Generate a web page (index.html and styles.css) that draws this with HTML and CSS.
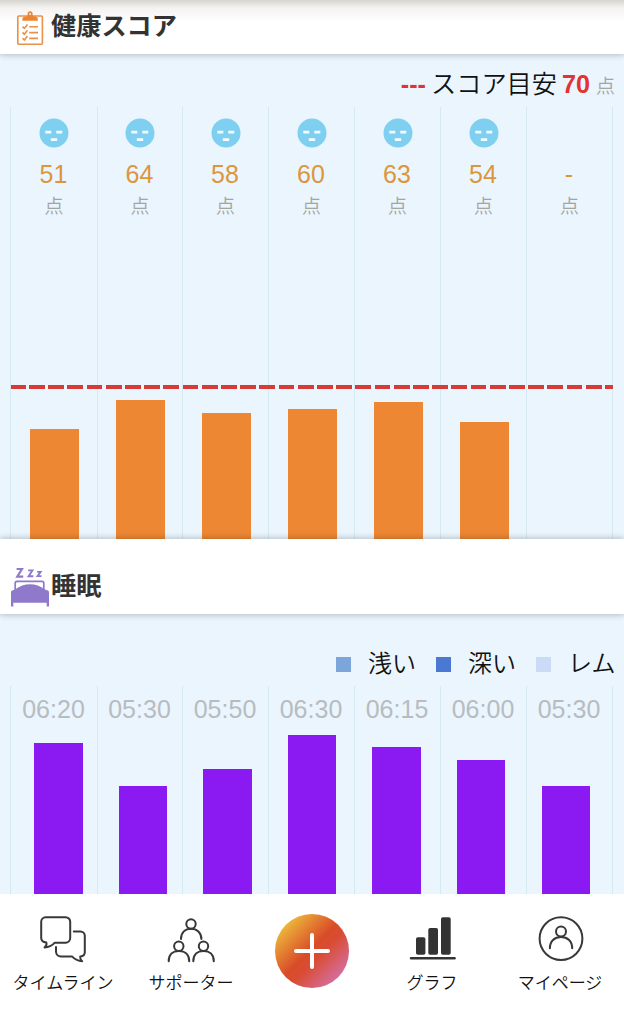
FILE: index.html
```html
<!DOCTYPE html>
<html lang="ja">
<head>
    <meta charset="UTF-8">
    <meta name="viewport" content="width=device-width, initial-scale=1.0">
    <title>グラフ</title>
    <link rel="stylesheet" href="styles.css">
</head>
<body>

    <svg class="defs" width="0" height="0">
        <symbol id="face" viewBox="0 0 30 30">
            <circle cx="15" cy="15" r="14.5" fill="#7fcff0"/>
            <path d="M6.3 14.1h6M17.3 14.1h6M11.8 21.6h6.4" stroke="#f4fbff" stroke-width="2.8"/>
        </symbol>
    </svg>

    <div class="header header-score">
        <svg class="icon-clipboard" width="28" height="36" viewBox="0 0 28 36" fill="none" stroke="#e8914a" stroke-width="1.6">
            <rect x="1.8" y="6" width="24.6" height="28.2" rx="1"/>
            <path d="M6.4 10.8V9q0-1.8 1.8-2.2l3.4-.9V3.8a2.5 2.5 0 0 1 5 0v2.1l3.4.9q1.8.4 1.8 2.2v1.8z" fill="#ec8432" stroke="none"/>
            <circle cx="14.100" cy="4" r="0.9" fill="#fff" stroke="none"/>
            <path d="M6.500 16.600l1.800 1.800 3.200-4M6.500 22.400l1.800 1.800 3.200-4M6.500 28.200l1.800 1.800 3.200-4M13.200 16.800h8.800M13.200 22.600h8.800M13.200 28.400h8.800"/>
        </svg>
        <h2>健康スコア</h2>
    </div>

    <div class="section section-score">
        <div class="legend-score">
            <span class="target-dash">---</span>
            <span>スコア目安</span>
            <span class="target-value">70</span>
            <span class="unit">点</span>
        </div>
        <div class="chart">
            <div class="columns">
                <div class="column"><svg class="face"><use href="#face"/></svg><span class="score">51</span><span class="unit">点</span></div>
                <div class="column"><svg class="face"><use href="#face"/></svg><span class="score">64</span><span class="unit">点</span></div>
                <div class="column"><svg class="face"><use href="#face"/></svg><span class="score">58</span><span class="unit">点</span></div>
                <div class="column"><svg class="face"><use href="#face"/></svg><span class="score">60</span><span class="unit">点</span></div>
                <div class="column"><svg class="face"><use href="#face"/></svg><span class="score">63</span><span class="unit">点</span></div>
                <div class="column"><svg class="face"><use href="#face"/></svg><span class="score">54</span><span class="unit">点</span></div>
                <div class="column"><svg class="face"></svg><span class="score">-</span><span class="unit">点</span></div>
            </div>
            <div class="target-line"></div>
            <div class="bars bars-score">
                <div class="bar" style="height: 110.5px"></div>
                <div class="bar" style="height: 139px"></div>
                <div class="bar" style="height: 126px"></div>
                <div class="bar" style="height: 130.5px"></div>
                <div class="bar" style="height: 137px"></div>
                <div class="bar" style="height: 117.5px"></div>
            </div>
        </div>
    </div>

    <div class="header header-sleep">
        <svg class="icon-bed" width="38" height="40" viewBox="0 0 38 40" fill="none" stroke="#8f79cb">
            <path d="M5.6 2h5.4L6.2 9.6h6" stroke-width="2.1"/>
            <path d="M17.2 3.4h4.2L17.600 9.200h4.700" stroke-width="1.9"/>
            <path d="M26.200 4.800h3.500l-3.200 4.400h4" stroke-width="1.8"/>
            <path d="M4.200 24v-7.800q0-1.800 1.800-1.800h25q1.800 0 1.800 1.800V24" stroke-width="1.700"/>
            <path d="M0 39.500V25.200q0-1.200 1.200-1.600L4 22.600Q11 17.300 19 17.300T34 22.600l2.800 1q1.200.4 1.200 1.600v14.300h-2.300v-3.800H2.300v3.800z" fill="#8f79cb" stroke="none"/>
        </svg>
        <h2>睡眠</h2>
    </div>

    <div class="section section-sleep">
        <div class="legend-sleep">
            <span class="swatch light"></span><span class="label">浅い</span>
            <span class="swatch deep"></span><span class="label">深い</span>
            <span class="swatch rem"></span><span class="label">レム</span>
        </div>
        <div class="chart">
            <div class="columns">
                <div class="column time">06:20</div>
                <div class="column time">05:30</div>
                <div class="column time">05:50</div>
                <div class="column time">06:30</div>
                <div class="column time">06:15</div>
                <div class="column time">06:00</div>
                <div class="column time">05:30</div>
            </div>
            <div class="bars bars-sleep">
                <div class="bar" style="height: 151.5px"></div>
                <div class="bar" style="height: 108px"></div>
                <div class="bar" style="height: 125.5px"></div>
                <div class="bar" style="height: 159.5px"></div>
                <div class="bar" style="height: 147px"></div>
                <div class="bar" style="height: 134px"></div>
                <div class="bar" style="height: 108px"></div>
            </div>
        </div>
    </div>

    <div class="nav">
        <div class="nav-item">
            <svg width="48" height="48" viewBox="0 0 48 48" fill="none" stroke="#383838" stroke-width="2" stroke-linecap="round" stroke-linejoin="round">
                <path d="M6.6 2.2h20a4.6 4.6 0 0 1 4.6 4.6v16.3a4.6 4.6 0 0 1-4.6 4.600H15.800q-4.200 4.600-10.200 4.700Q8 30.600 7.400 27.600 2.200 27 2.200 23.100V6.800a4.600 4.600 0 0 1 4.400-4.600z"/>
                <path d="M34.800 16.400h6.600a4.400 4.400 0 0 1 4.400 4.400v16.400q0 3.800-4.600 4.400-.3 2.800 2 4.600-5.600 0-10.200-4.800H22a5 5 0 0 1-5-5v-4.400"/>
            </svg>
            <span>タイムライン</span>
        </div>
        <div class="nav-item">
            <svg width="48" height="48" viewBox="0 0 48 48" fill="none" stroke="#383838" stroke-width="2" stroke-linecap="round">
                <circle cx="24" cy="9" r="4.7"/>
                <path d="M14 24c0-6.500 4.200-10.300 10-10.300S34.400 17.500 34.400 24"/>
                <circle cx="11.800" cy="31.200" r="4.700"/>
                <path d="M1.700 46.200c0-6.600 4.200-10.300 10.200-10.300s10.300 3.700 10.300 10.300"/>
                <circle cx="36.500" cy="31.200" r="4.700"/>
                <path d="M26.300 46.200c0-6.600 4.200-10.300 10.200-10.300s10.300 3.700 10.300 10.300"/>
            </svg>
            <span>サポーター</span>
        </div>
        <div class="nav-add">
            <svg width="38" height="38" viewBox="0 0 38 38" stroke="#fff" stroke-width="4" stroke-linecap="round">
                <path d="M19 3v32M3 19h32"/>
            </svg>
        </div>
        <div class="nav-item">
            <svg width="48" height="48" viewBox="0 0 48 48" fill="#333">
                <rect x="8" y="22.300" width="9.400" height="17.400" rx="1.800"/>
                <rect x="20.300" y="13" width="9.700" height="26.700" rx="1.800"/>
                <rect x="33" y="2.300" width="9.700" height="37.400" rx="1.800"/>
                <rect x="1.800" y="41.900" width="46" height="2.500" rx="1.200"/>
            </svg>
            <span>グラフ</span>
        </div>
        <div class="nav-item">
            <svg width="48" height="48" viewBox="0 0 48 48" fill="none" stroke="#383838" stroke-width="2" stroke-linecap="round">
                <circle cx="25" cy="23.600" r="21.400"/>
                <circle cx="25" cy="16.600" r="5"/>
                <path d="M13.900 33.200c0-7 4.500-11.200 11.100-11.200s11.200 4.200 11.200 11.200"/>
            </svg>
            <span>マイページ</span>
        </div>
    </div>

</body>
</html>
```
FILE: styles.css
```css
* {
    box-sizing: border-box;
}

body {
    font-family: "Liberation Sans", "Noto Sans CJK JP", sans-serif;
    margin: 0;
    width: 624px;
    height: 1024px;
    overflow: hidden;
    background-color: #fff;
    color: #111;
}

.defs {
    display: block;
}

.header {
    display: flex;
    position: relative;
    background-color: #fff;
    box-shadow: 0 0 7px rgba(0, 0, 0, 0.3);
}

.header h2 {
    font-size: 25.2px;
    line-height: 36px;
    font-weight: bold;
    margin: 0;
    color: #333;
}

.header-score {
    height: 54px;
    padding: 8px 0 0 16px;
    gap: 7px;
    background: linear-gradient(#d8d5d0, #f4f3f1 8px, #fff 22px);
}

.icon-clipboard {
    margin-top: 2px;
}

.header-sleep {
    height: 75px;
    padding: 28px 0 0 11px;
    gap: 2px;
}

.header-sleep h2 {
    margin-top: 1px;
}

.section {
    display: flex;
    flex-direction: column;
    background-color: #eaf5fe;
}

.section-score {
    height: 485px;
}

.section-sleep {
    height: 280px;
}

.legend-score {
    display: flex;
    justify-content: flex-end;
    align-items: baseline;
    height: 53px;
    padding: 12px 9px 0 0;
    font-size: 25.2px;
    font-weight: 350;
    line-height: 37px;
}

.target-dash,
.target-value {
    color: #e2332e;
    font-weight: bold;
}

.target-dash {
    margin-right: 5px;
}

.target-value {
    margin: 0 6px 0 5px;
}

.unit {
    color: #a2a5a1;
    font-size: 19px;
    font-weight: 350;
}

/* columns, target line and bars share one grid cell */
.chart {
    display: grid;
    grid-template-columns: 603px;
    flex: 1;
    margin-left: 10px;
}

.columns,
.target-line,
.bars {
    grid-area: 1 / 1;
}

.columns {
    display: grid;
    grid-template-columns: 87px 85px repeat(5, 86px);
    border-right: 1px solid #d5e9f2;
}

.column {
    display: flex;
    flex-direction: column;
    align-items: center;
    border-left: 1px solid #d5e9f2;
}

.column .unit {
    line-height: 28px;
    margin-top: 4px;
}

.face {
    width: 30px;
    height: 30px;
    margin-top: 11px;
}

.score {
    margin: 11px 1px 0 0;
    color: #dc963c;
    font-size: 25px;
    line-height: 30px;
}

.time {
    padding: 8px 1px 0 0;
    color: #b8bcc0;
    font-size: 25px;
    line-height: 30px;
}

.target-line {
    align-self: start;
    height: 4px;
    margin: 278px 0 0 1px;
    background: repeating-linear-gradient(90deg, #d63b36 0, #d63b36 15.7px, transparent 15.7px, transparent 19.2px) -1.2px 0 / 624px 4px;
}

.bars {
    display: grid;
    align-self: end;
    align-items: end;
}

.bars-score {
    grid-template-columns: repeat(6, 86px);
    margin-left: 20px;
}

.bars-sleep {
    grid-template-columns: repeat(6, 84.6px) 48.5px;
    margin-left: 24px;
}

.bar {
    width: 48.5px;
}

.bars-score .bar {
    background-color: #ee8733;
}

.bars-sleep .bar {
    background-color: #8b19f2;
}

.legend-sleep {
    display: flex;
    justify-content: flex-end;
    align-items: center;
    height: 72px;
    padding: 22px 8px 0 0;
    font-size: 24px;
    font-weight: 350;
}

.swatch {
    width: 15px;
    height: 15px;
    margin-top: 6px;
}

.legend-sleep .label {
    width: 48px;
    margin: 0 20px 0 17px;
}

.legend-sleep .label:last-child {
    margin-right: 0;
}

.light {
    background-color: #7ca6da;
}

.deep {
    background-color: #4a78d2;
}

.rem {
    background-color: #cbdaf5;
}

.nav {
    display: grid;
    grid-template-columns: 126px 130px 112px 128px 128px;
    height: 130px;
    background-color: #fff;
}

.nav-item {
    display: flex;
    flex-direction: column;
    align-items: center;
    padding-top: 21px;
    font-size: 17px;
    font-weight: 350;
    line-height: 26px;
    white-space: nowrap;
}

.nav-item span {
    margin-top: 8px;
}

.nav-add {
    display: flex;
    justify-content: center;
    align-items: center;
    justify-self: center;
    width: 74px;
    height: 74px;
    margin-top: 20px;
    border-radius: 50%;
    background: linear-gradient(135deg, #eebd3c 12%, #d94c28 48%, #d94c34 58%, #d470a4 88%);
}
```
